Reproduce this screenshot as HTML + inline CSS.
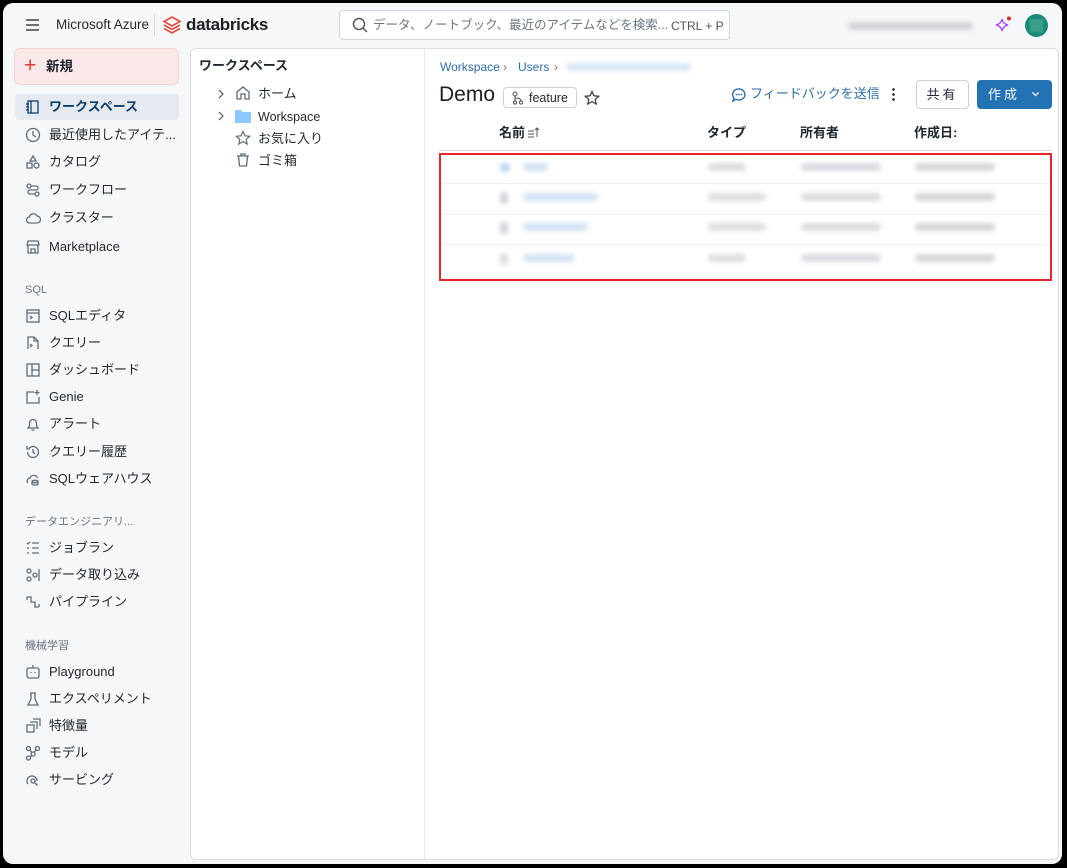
<!DOCTYPE html>
<html><head><meta charset="utf-8"><style>
*{box-sizing:border-box;margin:0;padding:0}
body{width:1067px;height:868px;background:#000;font-family:"Liberation Sans","Noto Sans CJK JP",sans-serif;color:#1f2937;overflow:hidden;position:relative}
.win{position:absolute;left:3px;top:3px;width:1059px;height:861px;background:#f6f7f9;border-radius:10px}
.abs{position:absolute}
.t{font-size:13px;line-height:16px;color:#1f272d;white-space:nowrap}
.nav{position:absolute;left:12px;width:167px;height:26px;display:flex;align-items:center;padding-left:10px;font-size:13px;line-height:16px;color:#1f272d;white-space:nowrap}
.nav svg{width:16px;height:16px;margin-right:8px;flex:none;fill:none;stroke:#5f6b77;stroke-width:1.3}
.lbl{position:absolute;left:25px;font-size:11px;line-height:14px;color:#6b7580}
.blur{position:absolute;height:8px;border-radius:4px;filter:blur(2.5px)}
</style></head><body>
<div class="win"></div>
 <!-- top bar -->
 <svg class="abs" style="left:25px;top:18px" width="16" height="14" viewBox="0 0 16 14"><path d="M1 2h13M1 7h13M1 12h13" stroke="#444" stroke-width="1.4"/></svg>
 <div class="abs t" style="left:56px;top:17px;font-size:13.5px">Microsoft Azure</div>
 <div class="abs" style="left:154px;top:14px;width:1px;height:22px;background:#d5d9de"></div>
 <svg class="abs" style="left:162px;top:15px" width="20" height="20" viewBox="0 0 20 20"><path d="M10 2l8 4.5-8 4.5-8-4.5z" fill="none" stroke="#e8483a" stroke-width="1.6"/><path d="M2 10l8 4.5 8-4.5M2 13.5l8 4.5 8-4.5" fill="none" stroke="#e8483a" stroke-width="1.6"/></svg>
 <div class="abs" style="left:186px;top:15px;font-size:17px;line-height:20px;font-weight:bold;color:#1b1f24;letter-spacing:-0.3px">databricks</div>
 <div class="abs" style="left:339px;top:10px;width:391px;height:30px;background:#fff;border:1px solid #cfd5db;border-radius:4px"></div>
 <svg class="abs" style="left:352px;top:17px" width="16" height="16" viewBox="0 0 16 16"><circle cx="7" cy="7" r="5.5" fill="none" stroke="#555" stroke-width="1.4"/><path d="M11 11l4 4" stroke="#555" stroke-width="1.4"/></svg>
 <div class="abs t" style="left:373px;top:17px;font-size:12.5px;color:#6b7580">データ、ノートブック、最近のアイテムなどを検索...</div>
 <div class="abs t" style="left:671px;top:18px;font-size:12px;color:#555">CTRL + P</div>
 <div class="blur" style="left:848px;top:22px;width:125px;background:#cfd3d7"></div>
 <svg class="abs" style="left:993px;top:15px" width="20" height="20" viewBox="0 0 20 20"><path d="M9 4q1 5 6 6-5 1-6 6-1-5-6-6 5-1 6-6z" fill="none" stroke="#a855f7" stroke-width="1.5"/><circle cx="16" cy="3.5" r="2" fill="#d12c3c"/></svg>
 <div class="abs" style="left:1025px;top:14px;width:23px;height:23px;border-radius:50%;background:#1b8a78"></div>
 <div class="abs" style="left:1030px;top:19px;width:13px;height:13px;background:#3aa08e;filter:blur(1px)"></div>

 <!-- sidebar -->
 <div class="abs" style="left:14px;top:48px;width:165px;height:37px;background:#fbe9e9;border:1px solid #f5d3d3;border-radius:6px"></div>
 <div class="abs" style="left:24px;top:55px;font-size:21px;color:#e53935;line-height:22px">+</div>
 <div class="abs t" style="left:46px;top:59px;font-weight:bold;font-size:13.5px">新規</div>
 <div class="abs" style="left:15px;top:94px;width:164px;height:26px;background:#e4eaf0;border-radius:4px"></div>
 <div class="nav" style="left:15px;top:94px;color:#0f3e69;font-weight:bold"><svg viewBox="0 0 16 16" style="stroke:#0f3e69"><rect x="3" y="2" width="10" height="12"/><path d="M6 2v12M1 5h3M1 8h3M1 11h3"/></svg>ワークスペース</div>
 <div class="nav" style="left:15px;top:122px"><svg viewBox="0 0 16 16"><circle cx="8" cy="8" r="6.5"/><path d="M8 4v4l3 2"/></svg>最近使用したアイテ...</div>
 <div class="nav" style="left:15px;top:149px"><svg viewBox="0 0 16 16"><path d="M8 2l3 5H5z"/><rect x="2" y="9" width="5" height="5"/><circle cx="11.5" cy="11.5" r="2.5"/></svg>カタログ</div>
 <div class="nav" style="left:15px;top:177px"><svg viewBox="0 0 16 16"><circle cx="4" cy="4" r="2"/><circle cx="12" cy="12" r="2"/><path d="M6 4h5a2 2 0 010 4H5a2 2 0 000 4h5"/></svg>ワークフロー</div>
 <div class="nav" style="left:15px;top:205px"><svg viewBox="0 0 16 16"><path d="M4.5 13a3 3 0 010-6 4 4 0 017.5-1 3.5 3.5 0 010 7z"/></svg>クラスター</div>
 <div class="nav" style="left:15px;top:234px"><svg viewBox="0 0 16 16"><path d="M2 6l1-4h10l1 4zM3 6v8h10V6M6 14v-4h4v4"/></svg>Marketplace</div>
 <div class="lbl" style="top:283px">SQL</div>
 <div class="nav" style="left:15px;top:303px"><svg viewBox="0 0 16 16"><rect x="2" y="2" width="12" height="12"/><path d="M2 5h12M5 8l2 1.5L5 11"/></svg>SQLエディタ</div>
 <div class="nav" style="left:15px;top:330px"><svg viewBox="0 0 16 16"><path d="M3 14V2h6l4 4v8M9 2v4h4M5 9l2 1.5L5 12"/></svg>クエリー</div>
 <div class="nav" style="left:15px;top:357px"><svg viewBox="0 0 16 16"><rect x="2" y="2" width="12" height="12"/><path d="M7 2v12M7 8h7"/></svg>ダッシュボード</div>
 <div class="nav" style="left:15px;top:384px"><svg viewBox="0 0 16 16"><path d="M9 3H2v11h12V8M12 1v5M9.5 3.5h5"/></svg>Genie</div>
 <div class="nav" style="left:15px;top:411px"><svg viewBox="0 0 16 16"><path d="M3 12h10l-1.5-2V7a3.5 3.5 0 00-7 0v3zM6.5 14h3"/></svg>アラート</div>
 <div class="nav" style="left:15px;top:439px"><svg viewBox="0 0 16 16"><path d="M2.5 8a5.5 5.5 0 101.6-3.9M2 2v3h3M8 5v3l2 2"/></svg>クエリー履歴</div>
 <div class="nav" style="left:15px;top:466px"><svg viewBox="0 0 16 16"><path d="M3 12a3 3 0 012-5 4 4 0 017.5 0"/><ellipse cx="10" cy="10.5" rx="3" ry="1.2"/><path d="M7 10.5v3c0 .7 6 .7 6 0v-3"/></svg>SQLウェアハウス</div>
 <div class="lbl" style="top:515px">データエンジニアリ...</div>
 <div class="nav" style="left:15px;top:535px"><svg viewBox="0 0 16 16"><path d="M7 3h7M7 8h7M7 13h7M2 3l1 1 2-2M2 8h2M2 13h2"/></svg>ジョブラン</div>
 <div class="nav" style="left:15px;top:562px"><svg viewBox="0 0 16 16"><circle cx="4" cy="4" r="2"/><circle cx="4" cy="12" r="2"/><circle cx="10" cy="8" r="2"/><path d="M14 2v12"/></svg>データ取り込み</div>
 <div class="nav" style="left:15px;top:589px"><svg viewBox="0 0 16 16"><path d="M2 3h4v5h4v5h4M2 3v3M14 13v-3"/></svg>パイプライン</div>
 <div class="lbl" style="top:639px">機械学習</div>
 <div class="nav" style="left:15px;top:659px"><svg viewBox="0 0 16 16"><rect x="2" y="4" width="12" height="10" rx="2"/><path d="M8 1v3M6 8v1M10 8v1"/></svg>Playground</div>
 <div class="nav" style="left:15px;top:686px"><svg viewBox="0 0 16 16"><path d="M6 2v6l-3 6h10l-3-6V2M5 2h6"/></svg>エクスペリメント</div>
 <div class="nav" style="left:15px;top:713px"><svg viewBox="0 0 16 16"><rect x="2" y="7" width="7" height="7"/><path d="M5 4h7v7M8 1h7v7"/></svg>特徴量</div>
 <div class="nav" style="left:15px;top:740px"><svg viewBox="0 0 16 16"><circle cx="3.5" cy="3.5" r="2"/><circle cx="12.5" cy="3.5" r="2"/><circle cx="8" cy="9" r="2"/><circle cx="3.5" cy="13" r="2"/><path d="M5 5l2 2.5M11 5l-2 2.5M7 10.5l-2 1.5"/></svg>モデル</div>
 <div class="nav" style="left:15px;top:767px"><svg viewBox="0 0 16 16"><path d="M3 12a5 5 0 119-3"/><circle cx="8" cy="9" r="2"/><path d="M9.5 10.5l3 3"/></svg>サービング</div>

 <!-- main panel -->
 <div class="abs" style="left:190px;top:48px;width:869px;height:812px;background:#fff;border:1px solid #d8dde3;border-radius:6px"></div>
 <div class="abs" style="left:424px;top:49px;width:1px;height:810px;background:#e3e7eb"></div>
 <div class="abs t" style="left:199px;top:58px;font-weight:bold">ワークスペース</div>
 <svg class="abs" style="left:217px;top:89px" width="8" height="10" viewBox="0 0 8 10"><path d="M2 1l4 4-4 4" fill="none" stroke="#555" stroke-width="1.2"/></svg>
 <svg class="abs" style="left:235px;top:85px" width="16" height="16" viewBox="0 0 16 16"><path d="M2 7l6-5 6 5v7H10V9H6v5H2z" fill="none" stroke="#5f6b77" stroke-width="1.3"/></svg>
 <div class="abs t" style="left:258px;top:86px">ホーム</div>
 <svg class="abs" style="left:217px;top:111px" width="8" height="10" viewBox="0 0 8 10"><path d="M2 1l4 4-4 4" fill="none" stroke="#555" stroke-width="1.2"/></svg>
 <svg class="abs" style="left:235px;top:109px" width="16" height="14" viewBox="0 0 16 14"><path d="M0 1h6l1.5 2H16v11H0z" fill="#8cc8ff"/></svg>
 <div class="abs t" style="left:258px;top:109px;font-size:12.5px">Workspace</div>
 <svg class="abs" style="left:235px;top:130px" width="16" height="16" viewBox="0 0 16 16"><path d="M8 1.5l2 4.3 4.6.5-3.4 3.1 1 4.6L8 11.6 3.8 14l1-4.6L1.4 6.3 6 5.8z" fill="none" stroke="#5f6b77" stroke-width="1.2"/></svg>
 <div class="abs t" style="left:258px;top:131px">お気に入り</div>
 <svg class="abs" style="left:235px;top:152px" width="16" height="16" viewBox="0 0 16 16"><path d="M2 4h12M6 4V2h4v2M3.5 4l1 10h7l1-10" fill="none" stroke="#5f6b77" stroke-width="1.3"/></svg>
 <div class="abs t" style="left:258px;top:153px">ゴミ箱</div>

 <!-- content -->
 <div class="abs t" style="left:440px;top:59px;font-size:12px;color:#2f6ea8">Workspace</div>
 <div class="abs t" style="left:503px;top:59px;font-size:12px;color:#777">›</div>
 <div class="abs t" style="left:518px;top:59px;font-size:12px;color:#2f6ea8">Users</div>
 <div class="abs t" style="left:554px;top:59px;font-size:12px;color:#777">›</div>
 <div class="blur" style="left:566px;top:63px;width:125px;background:#dae7f4"></div>
 <div class="abs" style="left:439px;top:83px;font-size:21px;line-height:24px;color:#1b1f24">Demo</div>
 <div class="abs" style="left:503px;top:87px;width:74px;height:21px;border:1px solid #c9d0d7;border-radius:4px"></div>
 <svg class="abs" style="left:511px;top:91px" width="13" height="14" viewBox="0 0 13 14"><circle cx="4" cy="3" r="2" fill="none" stroke="#555" stroke-width="1.1"/><circle cx="4" cy="11.5" r="1.6" fill="none" stroke="#555" stroke-width="1.1"/><circle cx="10" cy="11.5" r="1.6" fill="none" stroke="#555" stroke-width="1.1"/><path d="M4 5v5M4 7q6 0 6 3" fill="none" stroke="#555" stroke-width="1.1"/></svg>
 <div class="abs t" style="left:529px;top:90px;font-size:12.5px">feature</div>
 <svg class="abs" style="left:584px;top:90px" width="16" height="16" viewBox="0 0 16 16"><path d="M8 1.5l2 4.3 4.6.5-3.4 3.1 1 4.6L8 11.6 3.8 14l1-4.6L1.4 6.3 6 5.8z" fill="none" stroke="#444" stroke-width="1.3"/></svg>
 <svg class="abs" style="left:731px;top:87px" width="16" height="16" viewBox="0 0 16 16"><path d="M8 2a6 5.5 0 11-3 10.3L2 14l1-3A6 5.5 0 018 2z" fill="none" stroke="#2f6ea8" stroke-width="1.4"/><circle cx="5.5" cy="7.5" r=".9" fill="#2f6ea8"/><circle cx="8" cy="7.5" r=".9" fill="#2f6ea8"/><circle cx="10.5" cy="7.5" r=".9" fill="#2f6ea8"/></svg>
 <div class="abs t" style="left:750px;top:86px;color:#2f6ea8">フィードバックを送信</div>
 <div class="abs" style="left:892px;top:87px;width:3px;height:14px;background:radial-gradient(circle,#444 1.3px,transparent 1.5px) 0 0/3px 5px"></div>
 <div class="abs" style="left:916px;top:80px;width:53px;height:29px;border:1px solid #c9d0d7;border-radius:4px;font-size:13px;text-align:center;line-height:27px;letter-spacing:3px">共有</div>
 <div class="abs" style="left:977px;top:80px;width:75px;height:29px;background:#2272b4;border-radius:4px;color:#fff;font-size:13px;line-height:29px;padding-left:11px;letter-spacing:3px">作成</div>
 <svg class="abs" style="left:1031px;top:90px" width="9" height="8" viewBox="0 0 9 8"><path d="M1.5 2.5l3 3 3-3" fill="none" stroke="#fff" stroke-width="1.3"/></svg>

 <div class="abs t" style="left:499px;top:125px;font-weight:bold">名前</div>
 <svg class="abs" style="left:527px;top:126px" width="14" height="13" viewBox="0 0 14 13"><path d="M1 5h6M1 8h6M1 11h6M10 11V2M8 4l2-2 2 2" fill="none" stroke="#555" stroke-width="1"/></svg>
 <div class="abs t" style="left:707px;top:125px;font-weight:bold">タイプ</div>
 <div class="abs t" style="left:800px;top:125px;font-weight:bold">所有者</div>
 <div class="abs t" style="left:914px;top:125px;font-weight:bold">作成日:</div>
 <div class="abs" style="left:439px;top:150px;width:613px;height:1px;background:#d8dde3"></div>

 <div class="blur" style="left:500px;top:163px;width:10px;height:9px;background:#b8d6f4"></div>
 <div class="blur" style="left:523px;top:163px;width:25px;background:#d3e3f3"></div>
 <div class="blur" style="left:500px;top:192px;width:8px;height:12px;background:#d0d3d6"></div>
 <div class="blur" style="left:523px;top:193px;width:75px;background:#d3e3f3"></div>
 <div class="blur" style="left:500px;top:222px;width:8px;height:12px;background:#d0d3d6"></div>
 <div class="blur" style="left:523px;top:223px;width:65px;background:#d3e3f3"></div>
 <div class="blur" style="left:500px;top:253px;width:8px;height:12px;background:#dcdee0"></div>
 <div class="blur" style="left:523px;top:254px;width:52px;background:#d3e3f3"></div>
 <div class="blur" style="left:708px;top:163px;width:38px;background:#dcdee0"></div>
 <div class="blur" style="left:708px;top:193px;width:58px;background:#dcdee0"></div>
 <div class="blur" style="left:708px;top:223px;width:58px;background:#dcdee0"></div>
 <div class="blur" style="left:708px;top:254px;width:38px;background:#dcdee0"></div>
 <div class="blur" style="left:801px;top:163px;width:80px;background:#dadcdf"></div>
 <div class="blur" style="left:801px;top:193px;width:80px;background:#dadcdf"></div>
 <div class="blur" style="left:801px;top:223px;width:80px;background:#dadcdf"></div>
 <div class="blur" style="left:801px;top:254px;width:80px;background:#dadcdf"></div>
 <div class="blur" style="left:915px;top:163px;width:80px;background:#d4d6d9"></div>
 <div class="blur" style="left:915px;top:193px;width:80px;background:#d4d6d9"></div>
 <div class="blur" style="left:915px;top:223px;width:80px;background:#d4d6d9"></div>
 <div class="blur" style="left:915px;top:254px;width:80px;background:#d4d6d9"></div>
 <div class="abs" style="left:439px;top:183px;width:610px;height:1px;background:#f0f2f4"></div>
 <div class="abs" style="left:439px;top:214px;width:610px;height:1px;background:#f0f2f4"></div>
 <div class="abs" style="left:439px;top:244px;width:610px;height:1px;background:#f0f2f4"></div>
 <div class="abs" style="left:439px;top:153px;width:613px;height:128px;border:2px solid #e8242e"></div>
</body></html>
